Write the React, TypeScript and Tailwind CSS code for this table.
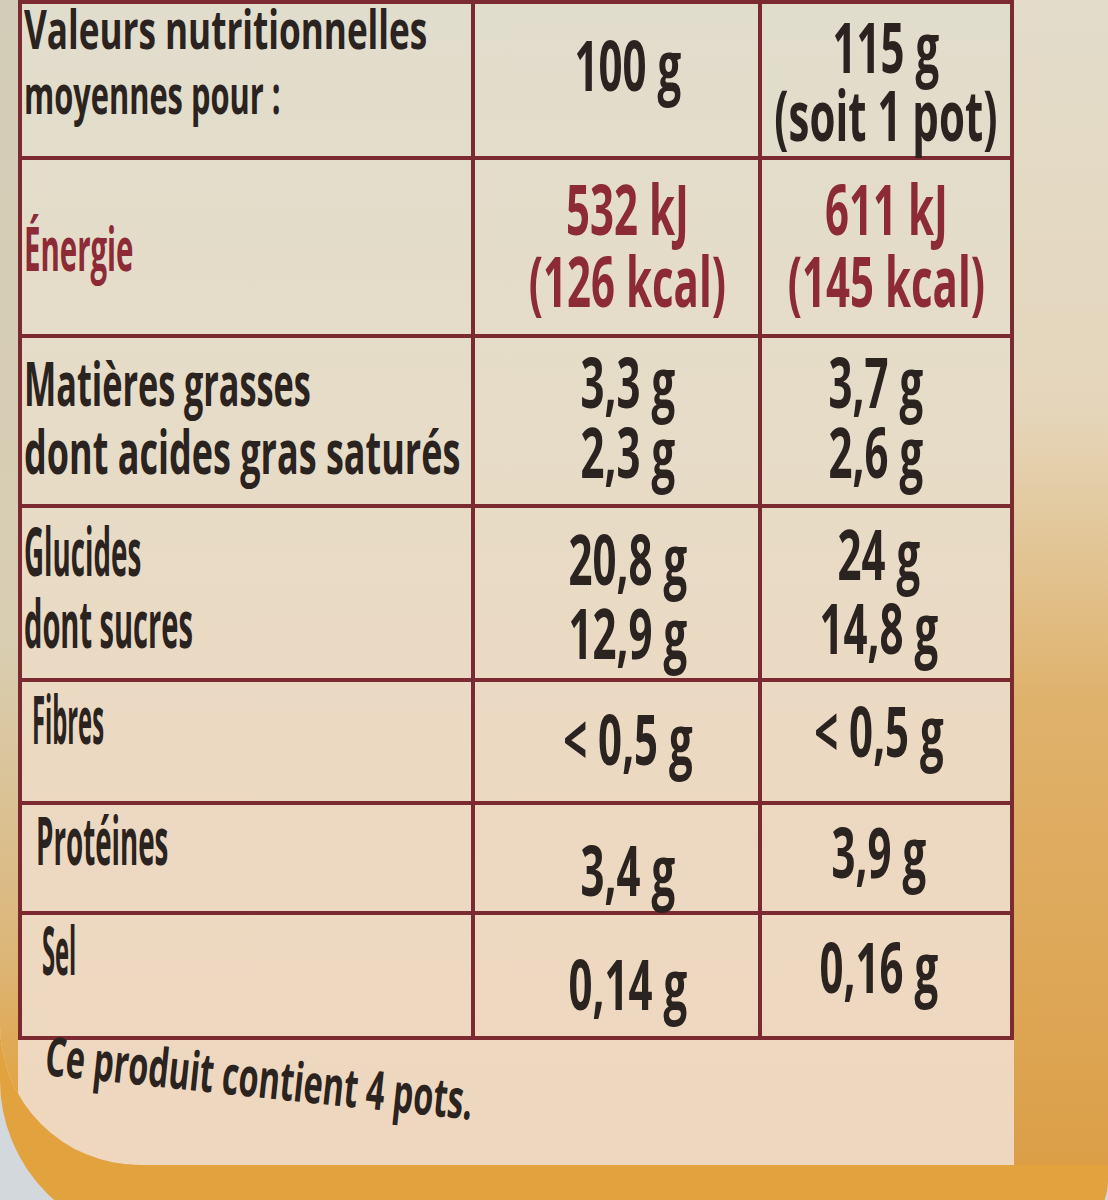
const FONT = "font-['Open_Sans','DejaVu_Sans',sans-serif]";

type Line = [string, string];

type Row = {
  h: string;
  label: Line[];
  labelCls: string;
  a: string[];
  aCls: string;
  b: string[];
  bCls: string;
  bPad: string;
  red?: boolean;
};

const rows: Row[] = [
  {
    h: 'h-[160px] border-t-[4px]',
    label: [
      ['Valeurs nutritionnelles', 'scale-x-[0.65]'],
      ['moyennes pour :', 'scale-x-[0.57]'],
    ],
    labelCls: 'flex flex-col gap-[9px] -mt-[4px] text-[54px] leading-[56px]',
    a: ['100 g'],
    aCls: 'pt-[24px] leading-[72px]',
    b: ['115 g', '(soit 1 pot)'],
    bCls: 'pt-[8px] leading-[68px]',
    bPad: 'pr-[0px]',
  },
  {
    h: 'h-[178px]',
    label: [['Énergie', 'scale-x-[0.49]']],
    labelCls: 'pt-[54px] text-[60px] leading-[68px]',
    a: ['532 kJ', '(126 kcal)'],
    aCls: 'pt-[12px] leading-[72px]',
    b: ['611 kJ', '(145 kcal)'],
    bCls: 'pt-[12px] leading-[72px]',
    bPad: 'pr-[0px]',
    red: true,
  },
  {
    h: 'h-[170px]',
    label: [
      ['Matières grasses', 'scale-x-[0.57]'],
      ['dont acides gras saturés', 'scale-x-[0.6]'],
    ],
    labelCls: 'pt-[11px] text-[60px] leading-[68px]',
    a: ['3,3 g', '2,3 g'],
    aCls: 'pt-[8px] leading-[70px]',
    b: ['3,7 g', '2,6 g'],
    bCls: 'pt-[8px] leading-[70px]',
    bPad: 'pr-[20px]',
  },
  {
    h: 'h-[174px]',
    label: [
      ['Glucides', 'scale-x-[0.42]'],
      ['dont sucres', 'scale-x-[0.44]'],
    ],
    labelCls: 'pt-[6px] text-[66px] leading-[72px]',
    a: ['20,8 g', '12,9 g'],
    aCls: 'pt-[13px] leading-[74px]',
    b: ['24 g', '14,8 g'],
    bCls: 'pt-[8px] leading-[74px]',
    bPad: 'pr-[14px]',
  },
  {
    h: 'h-[123px]',
    label: [['Fibres', 'scale-x-[0.36]']],
    labelCls: 'pt-[2px] pl-[8px] text-[66px] leading-[68px]',
    a: ['< 0,5 g'],
    aCls: 'pt-[20px] leading-[72px]',
    b: ['< 0,5 g'],
    bCls: 'pt-[12px] leading-[72px]',
    bPad: 'pr-[14px]',
  },
  {
    h: 'h-[110px]',
    label: [['Protéines', 'scale-x-[0.42]']],
    labelCls: 'pt-[0px] pl-[12px] text-[66px] leading-[68px]',
    a: ['3,4 g'],
    aCls: 'pt-[28px] leading-[72px]',
    b: ['3,9 g'],
    bCls: 'pt-[10px] leading-[72px]',
    bPad: 'pr-[14px]',
  },
  {
    h: 'h-[125px]',
    label: [['Sel', 'scale-x-[0.36]']],
    labelCls: 'pt-[0px] pl-[18px] text-[66px] leading-[68px]',
    a: ['0,14 g'],
    aCls: 'pt-[32px] leading-[72px]',
    b: ['0,16 g'],
    bCls: 'pt-[15px] leading-[72px]',
    bPad: 'pr-[14px]',
  },
];

function Label({ lines, className, red }: { lines: Line[]; className: string; red?: boolean }) {
  return (
    <div className={`${className} ${red ? 'text-[#8c2a36]' : 'text-[#2a2320]'}`}>
      {lines.map(([text, scale]) => (
        <div key={text} className="whitespace-nowrap">
          <span className={`inline-block origin-left ${scale}`}>{text}</span>
        </div>
      ))}
    </div>
  );
}

function Value({ lines, className, red }: { lines: string[]; className: string; red?: boolean }) {
  return (
    <div
      className={`flex flex-col items-center text-[70px] ${className} ${red ? 'text-[#8c2a36]' : 'text-[#2a2320]'}`}
    >
      {lines.map((l) => (
        <div key={l} className="whitespace-nowrap">
          <span className="inline-block scale-x-[0.6]">{l}</span>
        </div>
      ))}
    </div>
  );
}

export default function App() {
  return (
    <div className={`w-[1108px] h-[1200px] overflow-hidden bg-[#d3d8dc] ${FONT} font-bold`}>
      {/* orange rim of the pot */}
      <div className="h-[1240px] rounded-bl-[160px] rounded-br-[60px] bg-[#e2a23e] pb-[75px]">
        <div className="flex h-full rounded-bl-[140px] overflow-hidden bg-[linear-gradient(180deg,#e1ddcc_0%,#e6dcc8_35%,#ecd9c2_65%,#efd7bf_100%)]">
          {/* left edge */}
          <div className="w-[18px] shrink-0 bg-[linear-gradient(180deg,#d3ccb8_0%,#d9ceb2_55%,#dcb678_82%,#e2a23e_95%)]" />

          {/* label */}
          <div className="w-[996px] shrink-0 flex flex-col">
            <div className="border-x-[4px] border-[#7a2a30]">
              {rows.map((r, i) => (
                <div
                  key={i}
                  className={`grid grid-cols-[453px_287px_248px] border-b-[4px] border-[#7a2a30] ${r.h}`}
                >
                  <div className="border-r-[4px] border-[#7a2a30] pl-[2px]">
                    <Label lines={r.label} className={r.labelCls} red={r.red} />
                  </div>
                  <div className="border-r-[4px] border-[#7a2a30] pl-[22px]">
                    <Value lines={r.a} className={r.aCls} red={r.red} />
                  </div>
                  <div className={r.bPad}>
                    <Value lines={r.b} className={r.bCls} red={r.red} />
                  </div>
                </div>
              ))}
            </div>
            <div className="pl-[28px] -mt-[16px] text-[54px] leading-[60px] text-[#2a2320]">
              <span className="inline-block origin-left rotate-[6deg] scale-x-[0.6] whitespace-nowrap">
                Ce produit contient 4 pots.
              </span>
            </div>
          </div>

          {/* right side of the pot */}
          <div className="flex-1 bg-[linear-gradient(180deg,#e3dccb_0%,#e5d6bb_35%,#dfb26c_60%,#dc9f48_100%)]" />
        </div>
      </div>
    </div>
  );
}
